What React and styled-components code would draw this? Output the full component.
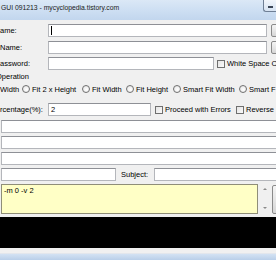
import React from 'react';
import styled, { createGlobalStyle } from 'styled-components';

const GlobalStyle = createGlobalStyle`
  html, body {
    margin: 0;
    padding: 0;
    background: #f0f0f0;
    overflow: hidden;
  }
  body {
    font-family: 'Liberation Sans', Arial, sans-serif;
  }
`;

const Window = styled.div`
  width: 276px;
  height: 260px;
  overflow: hidden;
  display: flex;
  flex-direction: column;
  background: #f0f0f0;
  color: #000;
  font-size: 7.5px;
`;

const TitleBar = styled.div`
  height: 20px;
  flex-shrink: 0;
  display: flex;
  justify-content: space-between;
  align-items: flex-start;
  background: linear-gradient(180deg, #dbe8f6 0%, #cfe0f3 45%, #c2d6ee 100%);
`;

const Title = styled.span`
  padding: 4px 0 0 1px;
  font-size: 6.8px;
  color: #1a1a1a;
  white-space: nowrap;
`;

const MinButton = styled.div`
  width: 13px;
  height: 12px;
  box-sizing: border-box;
  border: 1px solid #6f7f95;
  border-top: none;
  border-right: none;
  border-radius: 0 0 0 3px;
  background: linear-gradient(180deg, #f2f6fb 0%, #d6e3f2 100%);
  display: flex;
  align-items: center;
  justify-content: center;

  &::after {
    content: '';
    width: 5px;
    height: 2px;
    background: #3b4656;
    margin-top: 2px;
  }
`;

const Row = styled.div`
  display: flex;
  align-items: center;
  flex-shrink: 0;
  height: ${(p) => p.$h || 13}px;
  margin-top: ${(p) => p.$mt || 0}px;
  white-space: nowrap;
`;

const Label = styled.span`
  width: ${(p) => (p.$w ? `${p.$w}px` : 'auto')};
  margin-left: ${(p) => p.$ml || 0}px;
  flex-shrink: 0;
  white-space: nowrap;
`;

const Input = styled.div`
  box-sizing: border-box;
  height: 13px;
  width: ${(p) => p.$w}px;
  margin-left: ${(p) => p.$ml || 0}px;
  flex-shrink: 0;
  background: #fff;
  border: 1px solid #b4b6bb;
  border-top-color: #8e9096;
  padding-left: 2px;
  display: flex;
  align-items: center;
  line-height: 1;
`;

const Caret = styled.span`
  width: 1px;
  height: 9px;
  background: #000;
`;

const SideButton = styled.div`
  box-sizing: border-box;
  width: 20px;
  height: ${(p) => p.$h || 13}px;
  margin-left: 4px;
  flex-shrink: 0;
  border: 1px solid #8a8a8a;
  border-radius: 2px;
  background: linear-gradient(180deg, #f4f4f4 0%, #e6e6e6 50%, #d6d6d6 100%);
`;

const Check = styled.span`
  box-sizing: border-box;
  width: 8px;
  height: 8px;
  margin-left: ${(p) => p.$ml || 0}px;
  margin-right: 2px;
  flex-shrink: 0;
  border: 1px solid #6f6f6f;
  background: linear-gradient(135deg, #e4e4e4 0%, #fafafa 100%);
`;

const RadioItem = styled.span`
  display: flex;
  align-items: center;
  width: ${(p) => (p.$w ? `${p.$w}px` : 'auto')};
  flex-shrink: 0;
`;

const Radio = styled.span`
  box-sizing: border-box;
  width: 8px;
  height: 8px;
  margin-right: 2px;
  border-radius: 50%;
  flex-shrink: 0;
  border: 1px solid #6f6f6f;
  background: radial-gradient(circle at 60% 60%, #ffffff 0%, #e2e2e2 100%);
`;

const Memo = styled.div`
  box-sizing: border-box;
  width: 257px;
  height: 30px;
  margin-left: 1px;
  flex-shrink: 0;
  background: #ffffc6;
  border: 1px solid #8f8e78;
  padding: 1px 2px;
  line-height: 9px;
`;

const ScrollArrows = styled.div`
  width: 6px;
  height: 30px;
  margin-left: 4px;
  flex-shrink: 0;
  display: flex;
  flex-direction: column;
  justify-content: space-between;
  align-items: center;
  padding: 4px 0 5px;
  box-sizing: border-box;
`;

const Arrow = styled.span`
  width: 0;
  height: 0;
  border-left: 2px solid transparent;
  border-right: 2px solid transparent;
  ${(p) => (p.$down ? 'border-top: 2px solid #8a8a8a;' : 'border-bottom: 2px solid #8a8a8a;')}
`;

const Console = styled.div`
  height: 31px;
  margin-top: 3px;
  flex-shrink: 0;
  background: #000;
`;

const Spacer = styled.div`
  flex: 1;
  border-bottom: 1px solid #e2e6ec;
`;

const Frame = styled.div`
  height: 6px;
  flex-shrink: 0;
  background: linear-gradient(180deg, #d3e2f3 0%, #b9cfe9 100%);
`;

const radios = [
  { text: 'Fit 2 x Height', w: 60 },
  { text: 'Fit Width', w: 44 },
  { text: 'Fit Height', w: 47 },
  { text: 'Smart Fit Width', w: 66 },
  { text: 'Smart F', w: 36 },
];

export default function App() {
  return (
    <>
      <GlobalStyle />
      <Window>
        <TitleBar>
          <Title>GUI 091213 - mycyclopedia.tistory.com</Title>
          <MinButton />
        </TitleBar>

        <Row $mt={4}>
          <Label $w={48}>ame:</Label>
          <Input $w={219}>
            <Caret />
          </Input>
          <SideButton />
        </Row>
        <Row $mt={4}>
          <Label $w={48}>Name:</Label>
          <Input $w={219} />
          <SideButton />
        </Row>
        <Row $mt={3}>
          <Label $w={48}>assword:</Label>
          <Input $w={166} />
          <Check $ml={3} />
          <Label>White Space C</Label>
        </Row>

        <Row $h={12}>
          <Label $ml={-4}>Operation</Label>
        </Row>
        <Row $h={12} $mt={1}>
          <Label $w={22}>Width</Label>
          {radios.map((r) => (
            <RadioItem key={r.text} $w={r.w}>
              <Radio />
              {r.text}
            </RadioItem>
          ))}
        </Row>

        <Row $mt={8}>
          <Label $w={48}>rcentage(%):</Label>
          <Input $w={103}>2</Input>
          <Check $ml={4} />
          <Label $w={71}>Proceed with Errors</Label>
          <Check />
          <Label>Reverse I</Label>
        </Row>

        <Row $mt={4}>
          <Input $w={300} $ml={1} />
        </Row>
        <Row $mt={3}>
          <Input $w={300} $ml={1} />
        </Row>
        <Row $mt={3}>
          <Input $w={300} $ml={1} />
        </Row>
        <Row $mt={3}>
          <Input $w={115} $ml={1} />
          <Label $w={33} $ml={5}>Subject:</Label>
          <Input $w={150} />
        </Row>

        <Row $h={30} $mt={3}>
          <Memo>-m 0 -v 2</Memo>
          <ScrollArrows>
            <Arrow />
            <Arrow $down />
          </ScrollArrows>
          <SideButton $h={29} />
        </Row>

        <Console />
        <Spacer />
        <Frame />
      </Window>
    </>
  );
}
